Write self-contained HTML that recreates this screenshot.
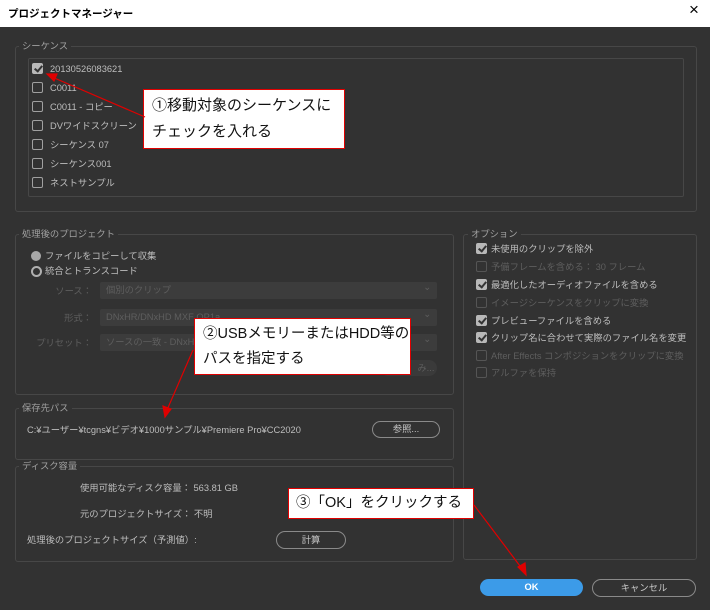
<!DOCTYPE html>
<html><head><meta charset="utf-8"><style>
body{margin:0;width:710px;height:610px;background:#323232;font-family:"Liberation Sans","Noto Sans CJK JP",sans-serif;position:relative;overflow:hidden;font-size:9.3px;line-height:12px;color:#bdbdbd}
.a{position:absolute;white-space:nowrap}
.fs{position:absolute;border:1px solid #474747;border-radius:3px}
.lg{position:absolute;background:#323232;padding:0 3px;color:#a0a0a0;font-size:9.3px;line-height:12px}
.cb{position:absolute;width:9px;height:9px;border:1.5px solid #a0a0a0;border-radius:2px}
.cb.on{background:#b8b8b8;border-color:#b8b8b8}
.cb.on::after{content:"";position:absolute;left:2.5px;top:0px;width:3px;height:6px;border:solid #333;border-width:0 2px 2px 0;transform:rotate(40deg)}
.cb.dis{border-color:#555}
.dd{position:absolute;left:100px;width:337px;height:17px;background:#3c3c3c;border-radius:2px;color:#5e5e5e;line-height:17px;text-indent:6px}
.dd::after{content:"⌄";position:absolute;right:6px;top:-3px;color:#5e5e5e}
.lb{position:absolute;color:#5e5e5e;text-align:right;width:92px;left:0}
.btn{position:absolute;border:1.5px solid #8a8a8a;border-radius:9px;text-align:center;color:#c8c8c8;box-sizing:border-box}
.call{position:absolute;background:#fff;border:1.5px solid #e00000;color:#111;font-size:14.5px;box-sizing:border-box}
.dis{color:#5e5e5e}
</style></head><body>
<div class="a" style="left:0;top:0;width:710px;height:27px;background:#fff"></div>
<div class="a" style="left:8px;top:8px;font-size:10.5px;font-weight:bold;color:#000">プロジェクトマネージャー</div>
<div class="a" style="left:689px;top:4px;font-size:17px;color:#000">×</div>

<div class="fs" style="left:15px;top:46px;width:680px;height:164px"></div>
<div class="lg" style="left:19px;top:40px">シーケンス</div>
<div class="a" style="left:28px;top:58px;width:654px;height:137px;border:1px solid #474747;border-radius:2px"></div>
<div class="cb on" style="left:32px;top:63px"></div><div class="a" style="left:50px;top:63px">20130526083621</div>
<div class="cb" style="left:32px;top:82px"></div><div class="a" style="left:50px;top:82px">C0011</div>
<div class="cb" style="left:32px;top:101px"></div><div class="a" style="left:50px;top:101px">C0011 - コピー</div>
<div class="cb" style="left:32px;top:120px"></div><div class="a" style="left:50px;top:120px">DVワイドスクリーン</div>
<div class="cb" style="left:32px;top:139px"></div><div class="a" style="left:50px;top:139px">シーケンス 07</div>
<div class="cb" style="left:32px;top:158px"></div><div class="a" style="left:50px;top:158px">シーケンス001</div>
<div class="cb" style="left:32px;top:177px"></div><div class="a" style="left:50px;top:177px">ネストサンプル</div>

<div class="fs" style="left:15px;top:234px;width:437px;height:159px"></div>
<div class="lg" style="left:19px;top:228px">処理後のプロジェクト</div>
<div class="a" style="left:31px;top:251px;width:10px;height:10px;border-radius:50%;background:#a8a8a8"></div><div class="a" style="left:45px;top:250px">ファイルをコピーして収集</div>
<div class="a" style="left:31px;top:266px;width:7px;height:7px;border-radius:50%;border:2px solid #b0b0b0"></div><div class="a" style="left:45px;top:265px">統合とトランスコード</div>
<div class="lb" style="top:285px">ソース：</div><div class="dd" style="top:282px">個別のクリップ</div>
<div class="lb" style="top:312px">形式：</div><div class="dd" style="top:309px">DNxHR/DNxHD MXF OP1a</div>
<div class="lb" style="top:337px">プリセット：</div><div class="dd" style="top:334px">ソースの一致 - DNxHR</div>
<div class="a" style="left:380px;top:360px;width:57px;height:16px;background:#3a3a3a;border-radius:8px;color:#5e5e5e;text-align:right;line-height:16px">み...&nbsp;</div>

<div class="fs" style="left:15px;top:408px;width:437px;height:50px"></div>
<div class="lg" style="left:19px;top:402px">保存先パス</div>
<div class="a" style="left:27px;top:424px">C:¥ユーザー¥tcgns¥ビデオ¥1000サンプル¥Premiere Pro¥CC2020</div>
<div class="btn" style="left:372px;top:421px;width:68px;height:17px;line-height:15px">参照...</div>

<div class="fs" style="left:15px;top:466px;width:437px;height:94px"></div>
<div class="lg" style="left:19px;top:460px">ディスク容量</div>
<div class="a" style="left:80px;top:482px">使用可能なディスク容量： 563.81 GB</div>
<div class="a" style="left:80px;top:508px">元のプロジェクトサイズ： 不明</div>
<div class="a" style="left:27px;top:534px">処理後のプロジェクトサイズ（予測値）:</div>
<div class="btn" style="left:276px;top:531px;width:70px;height:18px;line-height:16px">計算</div>

<div class="fs" style="left:463px;top:234px;width:232px;height:324px"></div>
<div class="lg" style="left:468px;top:228px">オプション</div>
<div class="cb on" style="left:476px;top:243px"></div><div class="a" style="left:491px;top:243px">未使用のクリップを除外</div>
<div class="cb dis" style="left:476px;top:261px"></div><div class="a dis" style="left:491px;top:261px">予備フレームを含める： 30 フレーム</div>
<div class="cb on" style="left:476px;top:279px"></div><div class="a" style="left:491px;top:279px">最適化したオーディオファイルを含める</div>
<div class="cb dis" style="left:476px;top:297px"></div><div class="a dis" style="left:491px;top:297px">イメージシーケンスをクリップに変換</div>
<div class="cb on" style="left:476px;top:315px"></div><div class="a" style="left:491px;top:315px">プレビューファイルを含める</div>
<div class="cb on" style="left:476px;top:332px"></div><div class="a" style="left:491px;top:332px">クリップ名に合わせて実際のファイル名を変更</div>
<div class="cb dis" style="left:476px;top:350px"></div><div class="a dis" style="left:491px;top:350px">After Effects コンポジションをクリップに変換</div>
<div class="cb dis" style="left:476px;top:367px"></div><div class="a dis" style="left:491px;top:367px">アルファを保持</div>

<div class="a" style="left:480px;top:579px;width:103px;height:17px;background:#3c9be8;border-radius:9px;color:#fff;text-align:center;line-height:17px;font-weight:bold">OK</div>
<div class="btn" style="left:592px;top:579px;width:104px;height:18px;line-height:16px">キャンセル</div>

<div class="call" style="left:143px;top:89px;width:202px;height:60px;padding:3px 0 0 8px;line-height:26px;font-size:15px">①移動対象のシーケンスに<br>チェックを入れる</div>
<div class="call" style="left:194px;top:318px;width:217px;height:57px;padding:3px 0 0 8px;line-height:25px">②USBメモリーまたはHDD等の<br>パスを指定する</div>
<div class="call" style="left:288px;top:488px;width:186px;height:31px;padding:4px 0 0 7px;line-height:20px">③「OK」をクリックする</div>

<svg class="a" style="left:0;top:0" width="710" height="610">
<g stroke="#e00000" stroke-width="1.2" fill="#e00000">
<line x1="145" y1="117" x2="52" y2="77"/><polygon points="47,74 57,74 54,81"/>
<line x1="193" y1="350" x2="167" y2="410"/><polygon points="165,417 163,406 171,409"/>
<line x1="474" y1="505" x2="523" y2="570"/><polygon points="526,575 518,567 525,563"/>
</g></svg>
</body></html>
